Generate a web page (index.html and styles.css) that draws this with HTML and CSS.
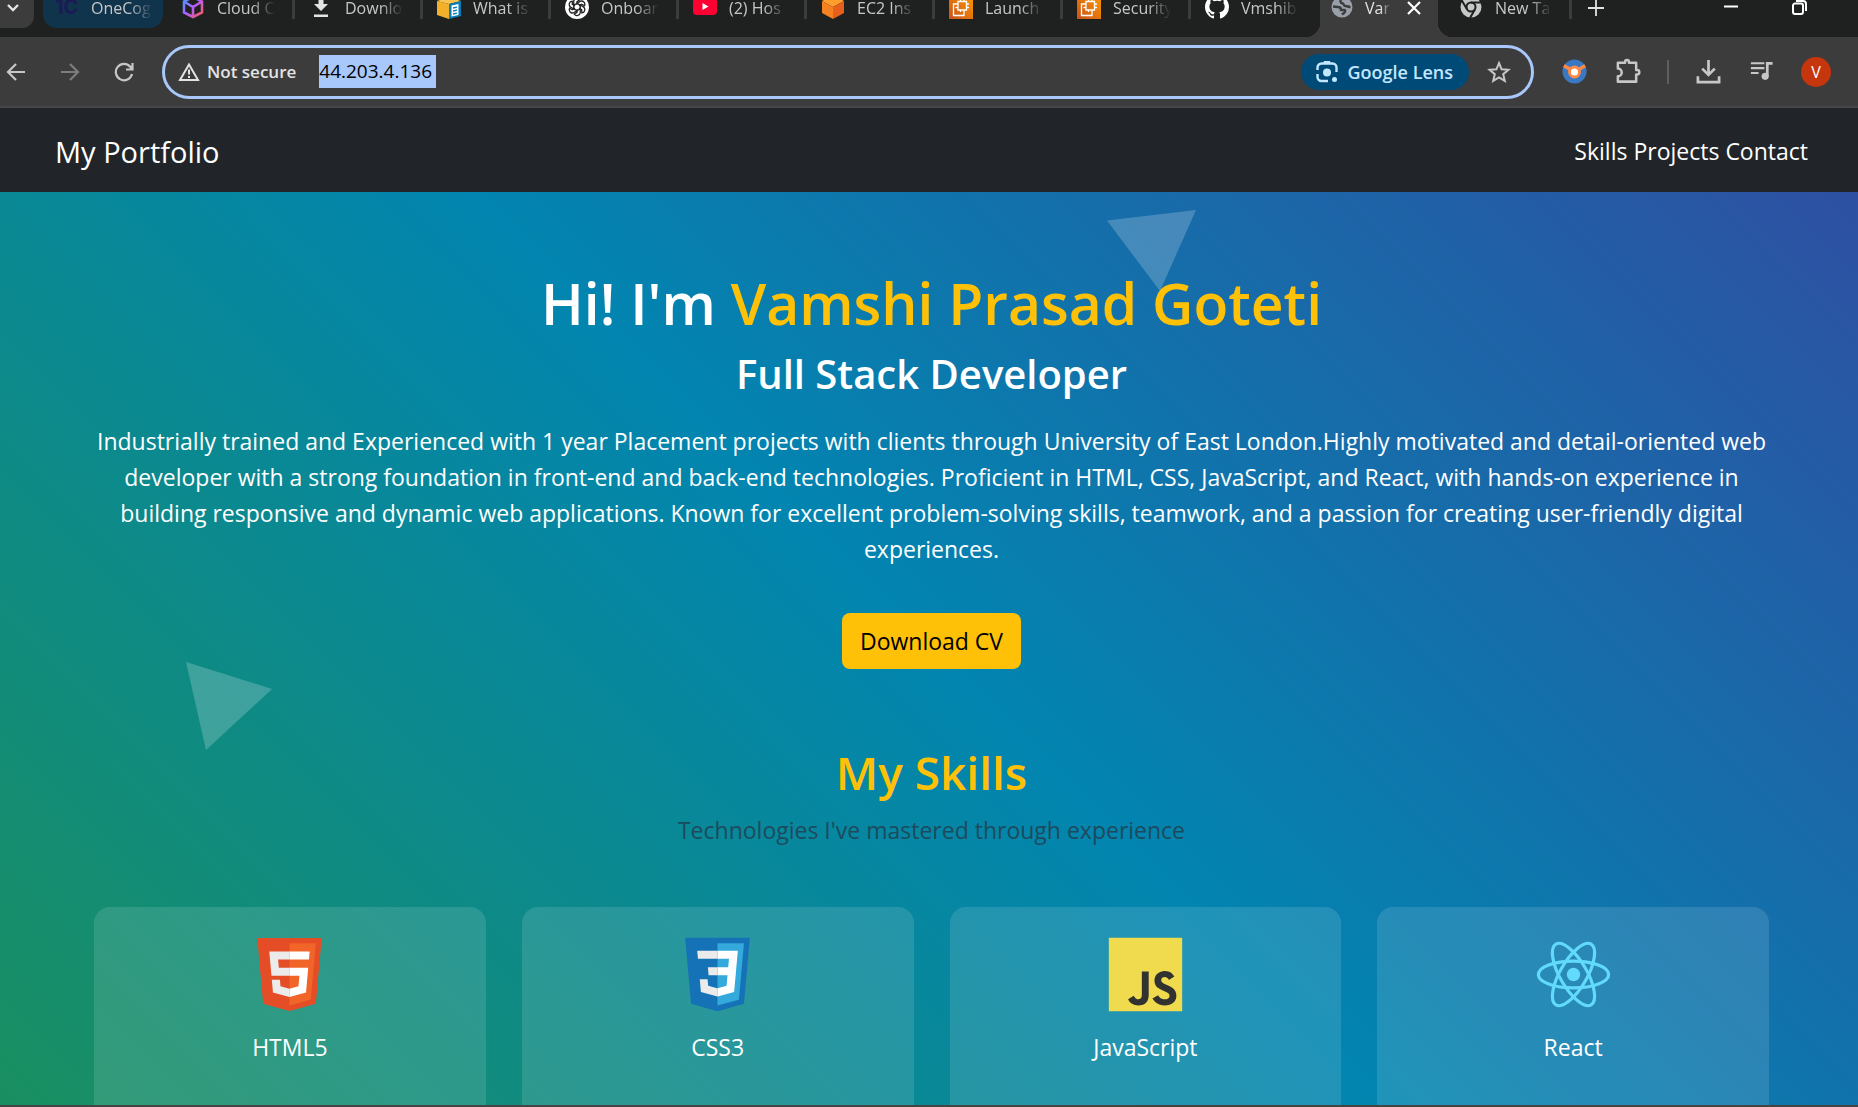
FILE: index.html
```html
<!DOCTYPE html>
<html lang="en">
<head>
<meta charset="utf-8">
<title>My Portfolio</title>
<link rel="stylesheet" href="styles.css">
</head>
<body>
<header class="browser">
  <div class="tabs">
    <button class="tab-search" aria-label="Search tabs"><svg viewBox="0 0 16 16"><path d="M3 5l5 5 5-5" fill="none" stroke="#e3e3e3" stroke-width="2.4"/></svg></button>
    <a class="tab tab-group" href="#"><span class="one-c" aria-hidden="true">1C</span><span class="tab-name">OneCog</span></a>
    <a class="tab" href="#"><svg class="fav" viewBox="0 0 24 24"><defs><linearGradient id="cube" x1="0" y1="0" x2="1" y2="1"><stop offset="0" stop-color="#3d9bff"/><stop offset=".5" stop-color="#b45cff"/><stop offset="1" stop-color="#ff5a4e"/></linearGradient></defs><path d="M12 2l9 4.500v11L12 22l-9-4.500v-11zM3 6.500l9 5.500 9-5.500M12 12v10" fill="none" stroke="url(#cube)" stroke-width="2.600"/></svg><span class="tab-name">Cloud C</span></a>
    <a class="tab" href="#"><svg class="fav" viewBox="0 0 24 24"><path d="M9.500 1h5v8H19l-7 7-7-7h4.500zM5 19.500h14V22H5z" fill="#e3e3e3"/></svg><span class="tab-name">Downlo</span></a>
    <a class="tab" href="#"><svg class="fav" viewBox="0 0 24 24"><path d="M0 6l12 3v15L0 20z" fill="#f4b02a"/><path d="M0 6l12-4 12 4-12 3z" fill="#f8c64f"/><path d="M12 9l12-3v15l-12 3z" fill="#0b7cba"/><path d="M14.500 10.500l7-1.500v11l-7 1.500z" fill="#fff"/><path d="M16 13l4-.8M16 16l4-.8M16 19l4-.8" stroke="#0b7cba" stroke-width="1.300"/></svg><span class="tab-name">What is</span></a>
    <a class="tab" href="#"><svg class="fav" viewBox="0 0 24 24"><circle cx="12" cy="12" r="12" fill="#fff"/><g fill="none" stroke="#222" stroke-width="1.300"><path id="k" d="M12 8.200l-3.300 2V6.500a3.300 3.300 0 0 1 6-1.600L12 6.600v3.200"/><use href="#k" transform="rotate(60 12 12)"/><use href="#k" transform="rotate(120 12 12)"/><use href="#k" transform="rotate(180 12 12)"/><use href="#k" transform="rotate(240 12 12)"/><use href="#k" transform="rotate(300 12 12)"/></g></svg><span class="tab-name">Onboar</span></a>
    <a class="tab" href="#"><svg class="fav" viewBox="0 0 24 24"><rect y="3" width="24" height="17" rx="4" fill="#ff0033"/><path d="M9.500 8l6 3.500-6 3.500z" fill="#fff"/></svg><span class="tab-name">(2) Hos</span></a>
    <a class="tab" href="#"><svg class="fav" viewBox="0 0 24 24"><path d="M12 0l11 6-11 6L1 6z" fill="#ff9d2e"/><path d="M1 6l11 6v12L1 18z" fill="#f58220"/><path d="M23 6l-11 6v12l11-6z" fill="#e65f1c"/></svg><span class="tab-name">EC2 Ins</span></a>
    <a class="tab" href="#"><svg class="fav" viewBox="0 0 24 24"><defs><linearGradient id="ec2" x1="0" y1="1" x2="1" y2="0"><stop offset="0" stop-color="#c8511b"/><stop offset="1" stop-color="#f90"/></linearGradient></defs><g id="chip"><path d="M0 0h24v24H0z" fill="url(#ec2)"/><path d="M8 9H4.500v11.500H15V17M9 6.500h8.500V15H9zM11.500 6.500V4M15 6.500V4M17.500 9H20M17.500 12.500H20M9 9H6.500M9 12.500H6.500M11.500 15v2M15 15v2" fill="none" stroke="#fff" stroke-width="1.300"/></g></svg><span class="tab-name">Launch</span></a>
    <a class="tab" href="#"><svg class="fav" viewBox="0 0 24 24"><use href="#chip"/></svg><span class="tab-name">Security</span></a>
    <a class="tab last" href="#"><svg class="fav" viewBox="0 0 16 16"><path fill="#fff" d="M8 0C3.580 0 0 3.580 0 8c0 3.540 2.290 6.530 5.470 7.590.4.070.55-.17.55-.38 0-.19-.01-.82-.01-1.490-2.010.37-2.530-.49-2.690-.94-.09-.23-.48-.94-.82-1.130-.28-.15-.68-.52-.01-.53.63-.01 1.080.58 1.230.82.72 1.210 1.870.87 2.330.66.070-.52.28-.87.51-1.070-1.780-.2-3.640-.89-3.640-3.950 0-.87.31-1.590.82-2.150-.08-.2-.36-1.020.08-2.120 0 0 .67-.21 2.200.82a7.600 7.600 0 0 1 4 0c1.530-1.040 2.200-.82 2.200-.82.44 1.100.16 1.920.08 2.120.51.56.82 1.270.82 2.150 0 3.070-1.870 3.750-3.650 3.950.29.25.54.73.54 1.480 0 1.070-.01 1.930-.01 2.200 0 .21.15.46.55.38A8 8 0 0 0 16 8c0-4.420-3.580-8-8-8z"/></svg><span class="tab-name">Vmshib</span></a>
    <div class="tab active"><svg class="fav" viewBox="0 0 24 24"><circle cx="12" cy="12" r="10.500" fill="#9aa0aa"/><path d="M3 11.500l5 .5c2 0 3 1 3 3h3.500c1 0 1 2-.5 3l-2 1.500M14 3.500c-3 0-3.500 1-3.500 3s1.500 1.500 2.500 2 .500 2.500 2.500 2.500 3 1 5 1" fill="none" stroke="#3c3c3c" stroke-width="2.400"/></svg><span class="tab-name">Var</span><button class="close" aria-label="Close tab"><svg viewBox="0 0 16 16"><path d="M2 2l12 12M14 2L2 14" stroke="#fff" stroke-width="2.200"/></svg></button></div>
    <a class="tab new" href="#"><svg class="fav" viewBox="0 0 24 24"><circle cx="12" cy="12" r="10.500" fill="#c7c7c7"/><circle cx="12" cy="12" r="4.500" fill="#c7c7c7" stroke="#1f2120" stroke-width="2"/><path d="M12 7.500h10M8 14.200L3 5.800M16 14.200L11 23" stroke="#1f2120" stroke-width="2"/></svg><span class="tab-name">New Ta</span></a>
    <button class="add" aria-label="New tab"><svg viewBox="0 0 16 16"><path d="M8 0v16M0 8h16" stroke="#e3e3e3" stroke-width="1.800"/></svg></button>
    <div class="window">
      <button aria-label="Minimise"><svg viewBox="0 0 16 16"><path d="M1 7.500h14" stroke="#fff" stroke-width="2"/></svg></button>
      <button aria-label="Restore"><svg viewBox="0 0 16 16"><path d="M5 2h7a3 3 0 0 1 3 3v7M4 4.500h6a2 2 0 0 1 2 2V13a2 2 0 0 1-2 2H4a2 2 0 0 1-2-2V6.500a2 2 0 0 1 2-2z" fill="none" stroke="#fff" stroke-width="2"/></svg></button>
    </div>
  </div>
  <div class="toolbar">
    <button class="nav-btn" aria-label="Back"><svg viewBox="0 0 20 20"><path d="M19 10H2M10 2l-8 8 8 8" fill="none" stroke="#c7c7c7" stroke-width="2.200"/></svg></button>
    <button class="nav-btn" aria-label="Forward"><svg viewBox="0 0 20 20"><path d="M1 10h17M10 2l8 8-8 8" fill="none" stroke="#7d7d7d" stroke-width="2.200"/></svg></button>
    <button class="nav-btn" aria-label="Reload"><svg viewBox="0 0 20 20"><path d="M18 12a8.200 8.200 0 1 1-1.500-7L18 7M18.500 1v6.500H12" fill="none" stroke="#c7c7c7" stroke-width="2.200"/></svg></button>
    <form class="address">
      <svg class="warn" viewBox="0 0 22 20"><path d="M11 2.500L20 18H2z" fill="none" stroke="#e3e3e3" stroke-width="2"/><path d="M11 7.500v5M11 14v2" stroke="#e3e3e3" stroke-width="2"/></svg>
      <label class="secure" for="url">Not secure</label>
      <input class="url" id="url" type="text" value="44.203.4.136">
      <span class="grow"></span>
      <button class="lens" type="button"><svg viewBox="0 0 24 24"><path d="M2.500 10V7.500a4 4 0 0 1 4-4h11a4 4 0 0 1 4 4V12M2.500 14v3a4 4 0 0 0 4 4H13" fill="none" stroke="#c2e7ff" stroke-width="2.400"/><path d="M9 1h6l1 3H8z" fill="#c2e7ff"/><circle cx="12" cy="12.500" r="4" fill="#c2e7ff"/><circle cx="19.500" cy="19.500" r="2.500" fill="#c2e7ff"/></svg>Google Lens</button>
      <button class="star" type="button" aria-label="Bookmark"><svg viewBox="0 0 24 24"><path d="M12 3l2.600 6.300 6.800.5-5.200 4.400 1.600 6.600L12 17.300l-5.800 3.500 1.600-6.600-5.200-4.400 6.800-.5z" fill="none" stroke="#c7c7c7" stroke-width="2"/></svg></button>
    </form>
    <div class="tools">
      <button aria-label="Extension"><svg viewBox="0 0 28 28"><circle cx="14" cy="14" r="12.500" fill="#3b78c3"/><path d="M3 8l7 4M25 8l-7 4" stroke="#ff8a47" stroke-width="3.500"/><circle cx="14" cy="14.500" r="5.200" fill="#fff" stroke="#ff8a47" stroke-width="3"/></svg></button>
      <button aria-label="Extensions"><svg viewBox="0 0 28 28"><path d="M4 5h7.500V4a2 2 0 0 1 4 0v1H23v7.500h1a2 2 0 0 1 0 4.500h-1v7.500H4V19a4 4 0 0 0 0-8z" fill="none" stroke="#c7c7c7" stroke-width="2.600" stroke-linejoin="round"/></svg></button>
      <span class="rule"></span>
      <button aria-label="Downloads"><svg viewBox="0 0 28 28"><path d="M14 2v15M7.500 11l6.500 6.500L20.500 11M3 19v6h22v-6" fill="none" stroke="#c7c7c7" stroke-width="2.800"/></svg></button>
      <button aria-label="Media"><svg viewBox="0 0 28 28"><path d="M3 5.500h14M3 10.500h14M3 15.500h8" stroke="#c7c7c7" stroke-width="2.200"/><path d="M20 19V5.500h5.500" fill="none" stroke="#c7c7c7" stroke-width="2.800"/><circle cx="17.800" cy="19" r="3.700" fill="#c7c7c7"/></svg></button>
      <button class="avatar">V</button>
    </div>
  </div>
</header>
<nav class="navbar">
  <a class="brand" href="#">My Portfolio</a>
  <div class="links"><a href="#skills">Skills</a> <a href="#projects">Projects</a> <a href="#contact">Contact</a></div>
</nav>
<main class="hero">
  <svg class="shape shape-top" viewBox="0 0 90 82"><path d="M0 10.500L89 0 53 81z" fill="#fff"/></svg>
  <svg class="shape shape-left" viewBox="0 0 87 88"><path d="M0 0l86 27-66 61z" fill="#fff"/></svg>
  <section class="intro">
    <h1>Hi! I'm <span>Vamshi Prasad Goteti</span></h1>
    <h2>Full Stack Developer</h2>
    <p>Industrially trained and Experienced with 1 year Placement projects with clients through University of East London.Highly motivated and detail-oriented web developer with a strong foundation in front-end and back-end technologies. Proficient in HTML, CSS, JavaScript, and React, with hands-on experience in building responsive and dynamic web applications. Known for excellent problem-solving skills, teamwork, and a passion for creating user-friendly digital experiences.</p>
    <a class="cv" href="#">Download CV</a>
  </section>
  <section class="skills" id="skills">
    <h2>My Skills</h2>
    <p>Technologies I've mastered through experience</p>
    <div class="cards">
      <article class="card"><svg viewBox="0 0 128 128"><path fill="#E44D26" d="M19.037 113.876L9.032 1.661h109.936l-10.016 112.198-45.019 12.480z"/><path fill="#F16529" d="M64 116.800l36.378-10.086 8.559-95.878H64z"/><path fill="#EBEBEB" d="M64 52.455H45.788L44.530 38.361H64V24.599H29.489l.33 3.692 3.382 37.927H64zm0 35.743l-.061.017-15.327-4.140-.979-10.975H33.816l1.928 21.609 28.193 7.826.063-.017z"/><path fill="#fff" d="M63.952 52.455v13.763h16.947l-1.597 17.849-15.350 4.143v14.319l28.215-7.820.207-2.325 3.234-36.233.335-3.696h-3.708zm0-27.856v13.762h33.244l.276-3.092.628-6.978.329-3.692z"/></svg><h3>HTML5</h3></article>
      <article class="card"><svg viewBox="0 0 128 128"><path fill="#1572B6" d="M18.814 114.123L8.760 1.352h110.480l-10.064 112.754-45.243 12.543z"/><path fill="#33A9DC" d="M64.001 117.062l36.559-10.136 8.601-96.354h-45.160z"/><path fill="#fff" d="M64.001 51.429h18.302l1.264-14.163H64.001V23.435h34.682l-.332 3.711-3.400 38.114h-30.950z"/><path fill="#EBEBEB" d="M64.083 87.349l-.61.018-15.403-4.159-.985-11.031H33.752l1.937 21.717 28.331 7.863.063-.018z"/><path fill="#fff" d="M81.127 64.675l-1.666 18.522-15.426 4.164v14.390l28.354-7.858.208-2.337 2.406-26.881z"/><path fill="#EBEBEB" d="M64.048 23.435v13.831H30.640l-.277-3.108-.63-7.012-.331-3.711zm-.047 27.996v13.831H48.792l-.277-3.108-.631-7.012-.330-3.711z"/></svg><h3>CSS3</h3></article>
      <article class="card"><svg viewBox="0 0 128 128"><path fill="#F0DB4F" d="M1.408 1.408h125.184v125.185H1.408z"/><path fill="#323330" d="M116.347 96.736c-.917-5.711-4.641-10.508-15.672-14.981-3.832-1.761-8.104-3.022-9.377-5.926-.452-1.690-.512-2.642-.226-3.665.821-3.320 4.784-4.355 7.925-3.403 2.023.678 3.938 2.237 5.093 4.724 5.402-3.498 5.391-3.475 9.163-5.879-1.381-2.141-2.118-3.129-3.022-4.045-3.249-3.629-7.676-5.498-14.756-5.355l-3.688.477c-3.534.893-6.902 2.748-8.877 5.235-5.926 6.724-4.236 18.492 2.975 23.335 7.104 5.332 17.540 6.545 18.873 11.531 1.297 6.104-4.486 8.080-10.234 7.378-4.236-.881-6.592-3.034-9.139-6.949-4.688 2.713-4.688 2.713-9.508 5.485 1.143 2.499 2.344 3.630 4.260 5.795 9.068 9.198 31.760 8.746 35.830-5.176.165-.478 1.261-3.666.38-8.581zM69.462 58.943H57.753l-.048 30.272c0 6.438.333 12.340-.714 14.149-1.713 3.558-6.152 3.117-8.175 2.427-2.059-1.012-3.106-2.451-4.319-4.485-.333-.584-.583-1.036-.667-1.071l-9.520 5.830c1.583 3.249 3.915 6.069 6.902 7.901 4.462 2.678 10.459 3.499 16.731 2.059 4.082-1.189 7.604-3.652 9.448-7.401 2.666-4.915 2.094-10.864 2.070-17.444.06-10.735.001-21.468.001-32.237z"/></svg><h3>JavaScript</h3></article>
      <article class="card"><svg viewBox="0 0 128 128"><g fill="none" stroke="#61DAFB" stroke-width="5.500"><ellipse cx="64" cy="64" rx="60" ry="23"/><ellipse cx="64" cy="64" rx="60" ry="23" transform="rotate(60 64 64)"/><ellipse cx="64" cy="64" rx="60" ry="23" transform="rotate(120 64 64)"/></g><circle cx="64" cy="64" r="11.400" fill="#61DAFB"/></svg><h3>React</h3></article>
    </div>
  </section>
</main>
</body>
</html>
```
FILE: styles.css
```css
* { box-sizing: border-box; }
body {
  margin: 0;
  height: 100vh;
  display: flex;
  flex-direction: column;
  overflow: hidden;
  background: #444444;
  color: #fff;
  font-family: "Open Sans", "Noto Sans", sans-serif;
  font-size: 23px;
}
a { color: inherit; text-decoration: none; }
button { border: 0; padding: 0; background: none; color: inherit; font: inherit; display: flex; align-items: center; justify-content: center; }
svg { display: block; flex: none; }
h1, h2, h3, p { margin: 0; font-weight: 400; }

/* Tab strip: its upper part is cut off by the window edge */
.browser { flex: none; background: #3c3c3c; border-bottom: 2px solid #474747; }
.tabs { display: flex; height: 37px; background: #1f2120; font-size: 16px; color: #c7c7c7; }
.tab-search { width: 34px; height: 28px; flex: none; background: #3c3c3c; border-radius: 0 0 12px 0; padding-right: 8px; padding-bottom: 12px; }
.tab-search svg { width: 16px; height: 16px; }
.tab { position: relative; display: flex; gap: 12px; width: 128px; flex: none; height: 19px; padding-left: 14px; padding-right: 17px; border-right: 3px solid #3c3c3c; }
.fav { width: 24px; height: 24px; margin-top: -5px; }
.tab-name { flex: 1; height: 28px; line-height: 24px; margin-top: -4px; overflow: hidden; white-space: nowrap; mask-image: linear-gradient(90deg, #000 60%, transparent); }
.tab-group { width: 120px; height: 28px; margin-left: 9px; margin-right: 4px; padding: 0 10px 0 12px; border: 0; border-radius: 0 0 14px 14px; background: #11344d; }
.one-c { width: 24px; margin-top: -7px; font: 700 20px/28px Inter, sans-serif; color: #1b1a55; }
.last { border: 0; padding-right: 18px; width: 125px; }
.active { width: 118px; height: 37px; padding: 0 8px 0 10px; margin-left: 4px; gap: 11px; border: 0; background: #3c3c3c; color: #e3e3e3; }
.active::before, .active::after { content: ""; position: absolute; bottom: 0; width: 14px; height: 14px; }
.active::before { left: -14px; background: radial-gradient(circle at 0 0, transparent 14px, #3c3c3c 14px); }
.active::after { right: -14px; background: radial-gradient(circle at 100% 0, transparent 14px, #3c3c3c 14px); }
.close { width: 16px; height: 16px; margin: 0 8px 0 4px; }
.close svg { width: 16px; height: 16px; }
.new { padding-left: 21px; width: 134px; }
.add { width: 20px; height: 16px; margin-left: 14px; }
.add svg { width: 16px; height: 16px; }
.window { display: flex; gap: 50px; margin-left: auto; padding-right: 50px; }
.window button { width: 18px; height: 14px; }
.window svg { width: 18px; height: 16px; }

.toolbar { display: flex; align-items: center; height: 69px; }
.nav-btn { width: 18px; height: 20px; margin-left: 7px; margin-right: 29px; flex: none; }
.nav-btn svg { width: 20px; height: 20px; }
.address { flex: 1; display: flex; align-items: center; height: 54px; padding: 0 20px 0 13px; border: 3px solid #a8c7fa; border-radius: 27px; color: #e3e3e3; font-size: 17px; }
.warn { width: 22px; height: 20px; }
.secure { font-weight: 600; margin-left: 7px; margin-right: 23px; white-space: nowrap; }
.url { width: 117px; height: 33px; border: 0; padding: 0; outline: 0; background: #a8c7fa; color: #000; font: 19px/33px "Open Sans", sans-serif; }
.grow { flex: 1; }
.lens { gap: 9px; height: 36px; padding: 0 16px 0 14px; border-radius: 18px; background: #004a77; color: #c2e7ff; font-size: 18px; font-weight: 600; white-space: nowrap; }
.lens svg, .star svg { width: 24px; height: 24px; }
.star { margin-left: 18px; }
.tools { display: flex; align-items: center; gap: 26px; padding: 0 27px; }
.tools svg { width: 27px; height: 27px; }
.rule { width: 2px; height: 24px; background: #5e5e5e; }
.avatar { width: 30px; height: 30px; border-radius: 50%; background: #c5360d; font-size: 16px; }

/* Portfolio site */
.navbar { flex: none; display: flex; align-items: center; justify-content: space-between; height: 84px; padding: 2px 50px 0 55px; background: #212529; }
.brand { font-size: 29px; }
.hero {
  position: relative;
  flex: 1;
  min-height: 0;
  overflow: hidden;
  margin-bottom: 2px;
  padding: 77px 89px 0 94px;
  background: linear-gradient(45deg, #198f60, #0285b0 50%, #2e50a2);
  text-align: center;
}
.shape { position: absolute; opacity: .2; }
.shape-top { width: 90px; height: 82px; left: 59.600%; top: 18px; }
.shape-left { width: 87px; height: 88px; left: 10%; top: 470px; }
.intro, .skills { position: relative; }
.intro h1 { font-size: 57px; line-height: 68px; font-weight: 600; }
.intro h1 span, .skills h2 { color: #ffc107; }
.intro h2 { margin-top: 12px; font-size: 40px; line-height: 50px; font-weight: 600; }
.intro p { margin-top: 24px; line-height: 36px; }
.cv { display: inline-block; margin-top: 46px; padding: 0 18px; border-radius: 8px; line-height: 56px; background: #ffc107; color: #000; }
.skills { margin-top: 75px; }
.skills h2 { font-size: 46px; line-height: 56px; font-weight: 600; }
.skills p { margin-top: 12px; line-height: 36px; color: #1c4b5d; }
.cards { display: grid; grid-template-columns: repeat(4, 1fr); gap: 36px; margin-top: 59px; }
.card { height: 260px; padding-top: 30px; border-radius: 16px; background: rgba(255, 255, 255, .12); }
.card svg { width: 75px; height: 75px; margin: 0 auto; }
.card h3 { margin-top: 17px; font-size: 23px; line-height: 36px; }
```
